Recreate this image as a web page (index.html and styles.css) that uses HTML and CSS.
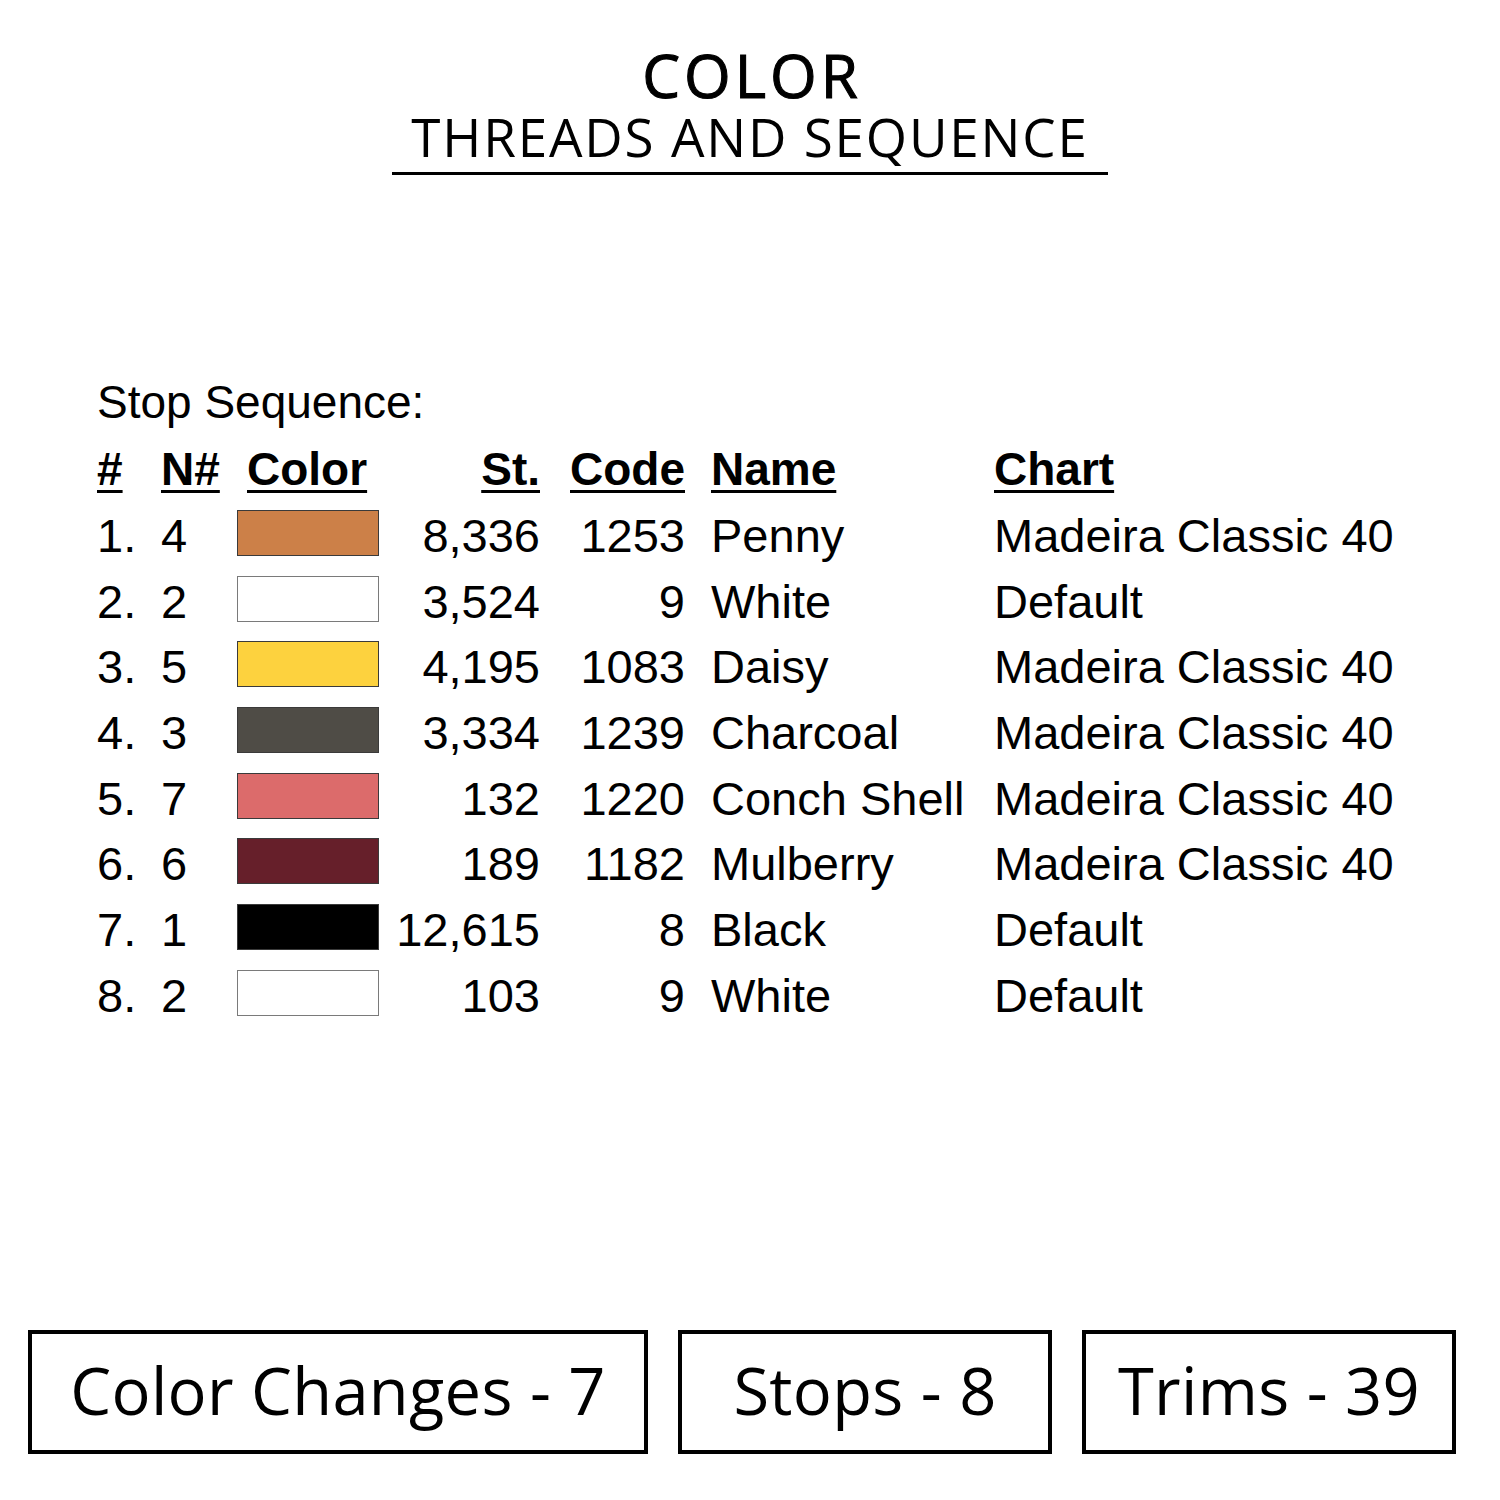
FILE: index.html
```html
<!DOCTYPE html>
<html>
<head>
<meta charset="utf-8">
<link rel="stylesheet" href="styles.css">
</head>
<body>
<div class="page">
  <header class="head">
    <div class="title">COLOR</div>
    <div class="subtitle">THREADS AND SEQUENCE</div>
    <div class="rule"></div>
  </header>

  <section class="seq">
    <div class="seq-label">Stop Sequence:</div>
    <div class="table">
      <div class="th">#</div>
      <div class="th">N#</div>
      <div class="th th-color">Color</div>
      <div class="th num">St.</div>
      <div class="th num">Code</div>
      <div class="th name">Name</div>
      <div class="th">Chart</div>

      <div class="td">1.</div><div class="td">4</div><div class="cell"><span class="sw penny"></span></div><div class="td num">8,336</div><div class="td num">1253</div><div class="td name">Penny</div><div class="td">Madeira Classic 40</div>
      <div class="td">2.</div><div class="td">2</div><div class="cell"><span class="sw white"></span></div><div class="td num">3,524</div><div class="td num">9</div><div class="td name">White</div><div class="td">Default</div>
      <div class="td">3.</div><div class="td">5</div><div class="cell"><span class="sw daisy"></span></div><div class="td num">4,195</div><div class="td num">1083</div><div class="td name">Daisy</div><div class="td">Madeira Classic 40</div>
      <div class="td">4.</div><div class="td">3</div><div class="cell"><span class="sw charcoal"></span></div><div class="td num">3,334</div><div class="td num">1239</div><div class="td name">Charcoal</div><div class="td">Madeira Classic 40</div>
      <div class="td">5.</div><div class="td">7</div><div class="cell"><span class="sw conch"></span></div><div class="td num">132</div><div class="td num">1220</div><div class="td name">Conch Shell</div><div class="td">Madeira Classic 40</div>
      <div class="td">6.</div><div class="td">6</div><div class="cell"><span class="sw mulberry"></span></div><div class="td num">189</div><div class="td num">1182</div><div class="td name">Mulberry</div><div class="td">Madeira Classic 40</div>
      <div class="td">7.</div><div class="td">1</div><div class="cell"><span class="sw black"></span></div><div class="td num">12,615</div><div class="td num">8</div><div class="td name">Black</div><div class="td">Default</div>
      <div class="td">8.</div><div class="td">2</div><div class="cell"><span class="sw white"></span></div><div class="td num">103</div><div class="td num">9</div><div class="td name">White</div><div class="td">Default</div>
    </div>
  </section>

  <footer class="stats">
    <div class="box box-a">Color Changes - 7</div>
    <div class="box box-b">Stops - 8</div>
    <div class="box box-c">Trims - 39</div>
  </footer>
</div>
</body>
</html>
```
FILE: styles.css
```css
html, body {
  margin: 0;
  padding: 0;
  background: #fff;
}
.page {
  width: 1500px;
  height: 1500px;
  color: #000;
  display: flex;
  flex-direction: column;
}
.head {
  display: flex;
  flex-direction: column;
  align-items: center;
  padding-top: 45px;
  font-family: "Open Sans", "Liberation Sans", sans-serif;
}
.title {
  font-size: 60px;
  font-weight: 400;
  -webkit-text-stroke: 1.1px #000;
  line-height: 60px;
  letter-spacing: 4px;
  padding-left: 4px;
}
.subtitle {
  font-size: 53px;
  font-weight: 400;
  line-height: 52px;
  letter-spacing: 1.8px;
  margin-top: 6px;
}
.rule {
  width: 716px;
  height: 3px;
  background: #000;
  margin-top: 9px;
}
.seq {
  padding-left: 97px;
  margin-top: 201px;
  font-family: "Liberation Sans", Arial, sans-serif;
}
.seq-label {
  font-size: 46px;
  line-height: 52px;
}
.table {
  display: grid;
  grid-template-columns: 64px 76px 142px 161px 145px 309px auto;
  grid-template-rows: 62px repeat(8, 65.7px);
  margin-top: 10px;
  font-size: 47px;
  align-items: center;
}
.th {
  font-weight: 700;
  font-size: 46px;
  text-decoration: underline;
  text-decoration-thickness: 3px;
  text-underline-offset: 5px;
}
.th-color { padding-left: 10px; }
.num { text-align: right; }
.name { padding-left: 26px; }
.td {
  line-height: 1;
  padding-top: 5px;
}
.sw {
  display: block;
  width: 142px;
  height: 46px;
  box-sizing: border-box;
  border: 1.5px solid #3a3a3a;
}
.sw.penny { background: #cc8048; }
.sw.white { background: #fff; border-color: #7a7a7a; }
.sw.daisy { background: #fdd23e; }
.sw.charcoal { background: #4f4c46; }
.sw.conch { background: #dc6b6b; }
.sw.mulberry { background: #661f2a; }
.sw.black { background: #000; }

.stats {
  margin-top: auto;
  margin-bottom: 46px;
  display: flex;
  padding-left: 28px;
  gap: 30px;
  font-family: "Open Sans", "Liberation Sans", sans-serif;
}
.box {
  box-sizing: border-box;
  height: 124px;
  border: 4.5px solid #000;
  display: flex;
  align-items: center;
  justify-content: center;
  font-size: 65px;
  font-weight: 400;
  letter-spacing: 0.3px;
  padding-bottom: 4px;
}
.box-a { width: 620px; }
.box-b { width: 374px; }
.box-c { width: 374px; }
```
